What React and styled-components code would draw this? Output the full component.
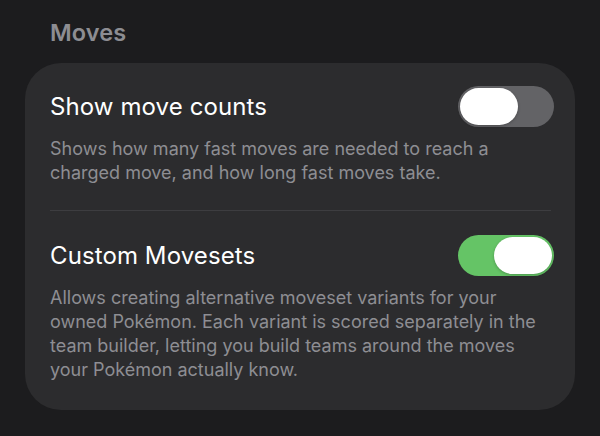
import React, { useState } from "react";
import styled, { createGlobalStyle } from "styled-components";

const GlobalStyle = createGlobalStyle`
  html, body {
    margin: 0;
    padding: 0;
    background: #1c1c1e;
  }
  body {
    font-family: Inter, "Noto Sans", "Liberation Sans", sans-serif;
    -webkit-font-smoothing: antialiased;
  }
`;

const Page = styled.div`
  width: 600px;
  height: 436px;
  box-sizing: border-box;
  padding: 17px 25px 0 25px;
`;

const SectionTitle = styled.h2`
  margin: 0 0 14px 25px;
  font-size: 23.5px;
  line-height: 32px;
  font-weight: 600;
  color: #8d8d92;
  letter-spacing: 0.1px;
`;

const Card = styled.div`
  background: #2c2c2e;
  border-radius: 36px;
  padding: 23px 21px 28px 25px;
  display: flex;
  flex-direction: column;
`;

const Setting = styled.div`
  display: flex;
  flex-direction: column;
`;

const Row = styled.div`
  display: flex;
  align-items: center;
  justify-content: space-between;
  height: 41px;
`;

const Label = styled.span`
  font-size: 24px;
  color: #ffffff;
  font-weight: 400;
  letter-spacing: 0.1px;
`;

const Description = styled.p`
  margin: 10px 0 0 0;
  padding-right: 8px;
  font-size: 18px;
  line-height: 24px;
  color: #8e8e93;
`;

const Divider = styled.hr`
  border: none;
  height: 1px;
  background: #3d3d40;
  margin: 25px 3px 24px 0;
`;

const Track = styled.button`
  width: 96px;
  height: 41px;
  border: none;
  border-radius: 21px;
  padding: 2px;
  box-sizing: border-box;
  background: ${(p) => (p.$on ? "#65c466" : "#636366")};
  display: flex;
  justify-content: ${(p) => (p.$on ? "flex-end" : "flex-start")};
  align-items: center;
  cursor: pointer;
`;

const Knob = styled.span`
  width: 58px;
  height: 37px;
  border-radius: 19px;
  background: #ffffff;
  box-shadow: 0 1px 3px rgba(0, 0, 0, 0.25);
`;

const Toggle = ({ on, onChange }) => (
  <Track $on={on} onClick={() => onChange(!on)}>
    <Knob />
  </Track>
);

const settings = [
  {
    id: "counts",
    label: "Show move counts",
    text: "Shows how many fast moves are needed to reach a charged move, and how long fast moves take.",
    on: false,
  },
  {
    id: "movesets",
    label: "Custom Movesets",
    text: "Allows creating alternative moveset variants for your owned Pokémon. Each variant is scored separately in the team builder, letting you build teams around the moves your Pokémon actually know.",
    on: true,
  },
];

const App = () => {
  const [values, setValues] = useState(
    Object.fromEntries(settings.map((s) => [s.id, s.on]))
  );

  return (
    <Page>
      <GlobalStyle />
      <SectionTitle>Moves</SectionTitle>
      <Card>
        {settings.map((s, i) => (
          <React.Fragment key={s.id}>
            {i > 0 && <Divider />}
            <Setting>
              <Row>
                <Label>{s.label}</Label>
                <Toggle
                  on={values[s.id]}
                  onChange={(v) => setValues({ ...values, [s.id]: v })}
                />
              </Row>
              <Description>{s.text}</Description>
            </Setting>
          </React.Fragment>
        ))}
      </Card>
    </Page>
  );
};

export default App;
